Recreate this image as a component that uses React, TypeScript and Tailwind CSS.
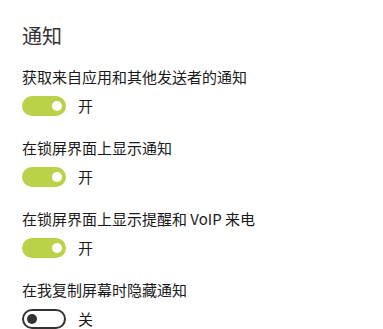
import React from "react";

const font = { fontFamily: '"Noto Sans CJK SC", "Noto Sans", sans-serif' };

function Toggle({ on }: { on: boolean }) {
  return (
    <div className="flex items-center h-[20px] mt-[9px]">
      {on ? (
        <div className="w-[44px] h-[20px] rounded-full bg-[#bad24a] flex items-center justify-end pr-[4px]">
          <div className="w-[10px] h-[10px] rounded-full bg-white" />
        </div>
      ) : (
        <div className="w-[44px] h-[20px] rounded-full border-2 border-[#333333] flex items-center pl-[3px]">
          <div className="w-[10px] h-[10px] rounded-full bg-[#333333]" />
        </div>
      )}
      <span className="ml-[12px] text-[15px] leading-[20px] text-[#1a1a1a]">{on ? "开" : "关"}</span>
    </div>
  );
}

function Group({ label, on, first }: { label: string; on: boolean; first?: boolean }) {
  return (
    <div className={first ? "mt-[17px]" : "mt-[22px]"}>
      <div className="text-[15px] leading-[20px] text-[#1a1a1a] whitespace-nowrap">{label}</div>
      <Toggle on={on} />
    </div>
  );
}

export default function App() {
  return (
    <div className="w-[383px] h-[329px] bg-white overflow-hidden pl-[22px] pt-[22px]" style={font}>
      <div className="text-[20px] leading-[28px] text-[#333333] font-normal">通知</div>
      <Group first label="获取来自应用和其他发送者的通知" on={true} />
      <Group label="在锁屏界面上显示通知" on={true} />
      <Group label="在锁屏界面上显示提醒和 VoIP 来电" on={true} />
      <Group label="在我复制屏幕时隐藏通知" on={false} />
    </div>
  );
}
